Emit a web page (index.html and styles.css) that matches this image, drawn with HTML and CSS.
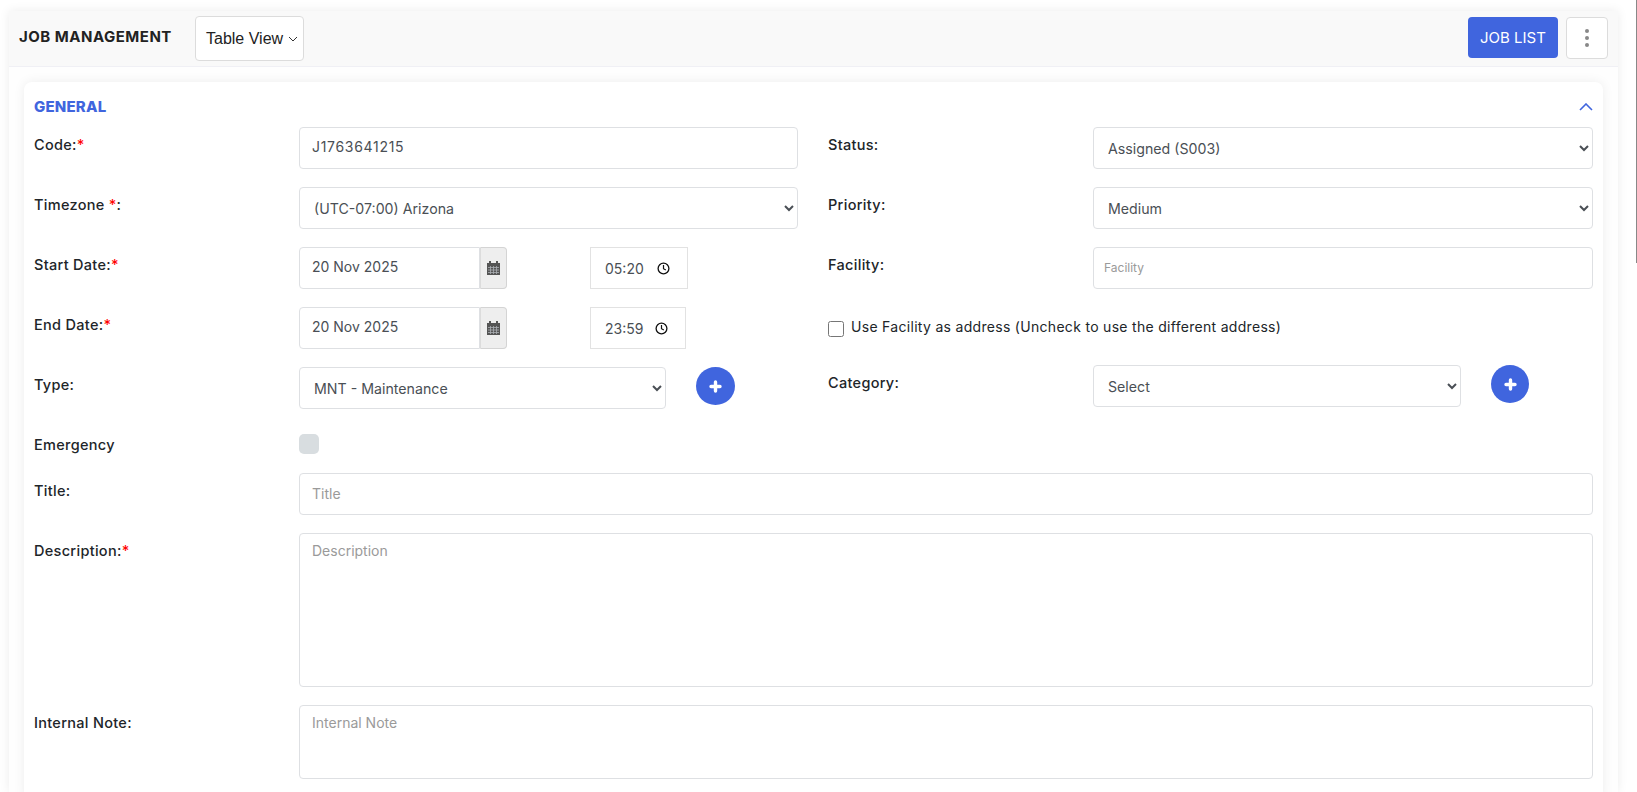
FILE: index.html
```html
<!DOCTYPE html>
<html lang="en">
<head>
    <meta charset="UTF-8">
    <meta name="viewport" content="width=device-width, initial-scale=1.0">
    <title>Job Management</title>
    <link rel="stylesheet" href="styles.css">
</head>
<body>
    <div class="page">
        <div class="panel">
            <div class="panel-header">
                <h1>JOB MANAGEMENT</h1>
                <div class="view-select">
                    <span>Table View</span>
                    <svg width="10" height="6" viewBox="0 0 10 6"><path d="M1 1l4 4 4-4" fill="none" stroke="#333" stroke-width="1"/></svg>
                </div>
                <div class="header-actions">
                    <button class="list-button">JOB LIST</button>
                    <button class="more-button"><span></span><span></span><span></span></button>
                </div>
            </div>

            <div class="panel-body">
                <div class="card">
                    <div class="card-title">
                        <h2>GENERAL</h2>
                        <svg width="14" height="8" viewBox="0 0 14 8"><path d="M1 7l6-6 6 6" fill="none" stroke="#4065de" stroke-width="1.600"/></svg>
                    </div>

                    <div class="form-grid">
                        <div class="row">
                            <label>Code:<em>*</em></label>
                            <input class="field code-input" type="text" value="J1763641215">
                        </div>
                        <div class="row">
                            <label>Status:</label>
                            <select class="field"><option>Assigned (S003)</option></select>
                        </div>

                        <div class="row">
                            <label>Timezone <em>*</em>:</label>
                            <select class="field"><option>(UTC-07:00) Arizona</option></select>
                        </div>
                        <div class="row">
                            <label>Priority:</label>
                            <select class="field"><option>Medium</option></select>
                        </div>

                        <div class="row">
                            <label>Start Date:<em>*</em></label>
                            <div class="date-time">
                                <div class="date-group">
                                    <input class="field" type="text" value="20 Nov 2025">
                                    <span class="date-addon">
                                        <svg width="13" height="14" viewBox="0 0 13 14"><path fill="#555" d="M2 0h2v2h5V0h2v2h2v12H0V2h2z"/><path stroke="#a9adb3" stroke-width="0.8" d="M1 6.500h11M1 9h11M1 11.500h11M3.500 5v8M6.500 5v8M9.500 5v8" fill="none"/></svg>
                                    </span>
                                </div>
                                <div class="time-box time-wide">
                                    <span>05:20</span>
                                    <svg width="13" height="13" viewBox="0 0 13 13"><circle cx="6.500" cy="6.500" r="5.400" fill="none" stroke="#111" stroke-width="1.300"/><path d="M6.500 3v3.700l2.300 1.300" fill="none" stroke="#111" stroke-width="1.200"/></svg>
                                </div>
                            </div>
                        </div>
                        <div class="row">
                            <label>Facility:</label>
                            <input class="field small-hint" type="text" placeholder="Facility">
                        </div>

                        <div class="row">
                            <label>End Date:<em>*</em></label>
                            <div class="date-time">
                                <div class="date-group">
                                    <input class="field" type="text" value="20 Nov 2025">
                                    <span class="date-addon">
                                        <svg width="13" height="14" viewBox="0 0 13 14"><path fill="#555" d="M2 0h2v2h5V0h2v2h2v12H0V2h2z"/><path stroke="#a9adb3" stroke-width="0.8" d="M1 6.500h11M1 9h11M1 11.500h11M3.500 5v8M6.500 5v8M9.500 5v8" fill="none"/></svg>
                                    </span>
                                </div>
                                <div class="time-box">
                                    <span>23:59</span>
                                    <svg width="13" height="13" viewBox="0 0 13 13"><circle cx="6.500" cy="6.500" r="5.400" fill="none" stroke="#111" stroke-width="1.300"/><path d="M6.500 3v3.700l2.300 1.300" fill="none" stroke="#111" stroke-width="1.200"/></svg>
                                </div>
                            </div>
                        </div>
                        <div class="row check-row">
                            <input type="checkbox" id="useFacility">
                            <label for="useFacility">Use Facility as address (Uncheck to use the different address)</label>
                        </div>

                        <div class="row">
                            <label>Type:</label>
                            <div class="with-add type-add">
                                <select class="field"><option>MNT - Maintenance</option></select>
                                <button class="add-button">
                                    <svg width="13" height="13" viewBox="0 0 13 13"><path d="M6.500 2v9M2 6.500h9" stroke="#fff" stroke-width="3.400" stroke-linecap="round"/></svg>
                                </button>
                            </div>
                        </div>
                        <div class="row category-row">
                            <label>Category:</label>
                            <div class="with-add category-add">
                                <select class="field"><option>Select</option></select>
                                <button class="add-button">
                                    <svg width="13" height="13" viewBox="0 0 13 13"><path d="M6.500 2v9M2 6.500h9" stroke="#fff" stroke-width="3.400" stroke-linecap="round"/></svg>
                                </button>
                            </div>
                        </div>
                    </div>

                    <div class="row emergency-row">
                        <label>Emergency</label>
                        <span class="switch-box"></span>
                    </div>
                    <div class="row full-row title-row">
                        <label>Title:</label>
                        <input class="field" type="text" placeholder="Title">
                    </div>
                    <div class="row full-row">
                        <label>Description:<em>*</em></label>
                        <textarea class="field desc-area" placeholder="Description"></textarea>
                    </div>
                    <div class="row full-row">
                        <label>Internal Note:</label>
                        <textarea class="field note-area" placeholder="Internal Note"></textarea>
                    </div>
                </div>
            </div>
        </div>
    </div>
    <div class="scroll-line"></div>
</body>
</html>
```
FILE: styles.css
```css
* {
    box-sizing: border-box;
}
html, body {
    height: 100%;
}
body {
    margin: 0;
    background-color: white;
    color: #212529;
    font-family: Inter, "Noto Sans", sans-serif;
    font-size: 14px;
    overflow: hidden;
}
.page {
    width: 1637px;
    height: 792px;
    padding: 11px 19px 0 9px;
}
.scroll-line {
    position: absolute;
    top: 0;
    right: 0;
    width: 1px;
    height: 263px;
    background-color: #888;
}
.panel {
    background-color: #fefefe;
    box-shadow: 0 0 10px rgba(0,0,0,0.08);
    height: 100%;
}
.panel-header {
    display: flex;
    align-items: flex-start;
    height: 56px;
    padding: 5px 10px 0 10px;
    background-color: #f9f9f9;
    border-bottom: 1px solid #f0f0f5;
}
h1 {
    margin: 12px 0 0 0;
    width: 176px;
    font-size: 15px;
    font-weight: 700;
    letter-spacing: 0.5px;
    line-height: 18px;
    color: #222;
}
.view-select {
    display: flex;
    align-items: center;
    gap: 5px;
    width: 109px;
    height: 45px;
    padding-left: 10px;
    background-color: white;
    border: 1px solid #dcdcdc;
    border-radius: 4px;
    font-family: "Liberation Sans", sans-serif;
    font-size: 16px;
    color: #222;
}
.header-actions {
    display: flex;
    gap: 8px;
    margin-left: auto;
    padding-top: 1px;
}
.list-button {
    width: 90px;
    height: 41px;
    background-color: #4065de;
    border: none;
    border-radius: 4px;
    color: white;
    font-family: Inter, sans-serif;
    font-size: 15px;
}
.more-button {
    display: flex;
    flex-direction: column;
    align-items: center;
    justify-content: center;
    gap: 3px;
    width: 42px;
    height: 42px;
    background-color: white;
    border: 1px solid #dcdcdc;
    border-radius: 4px;
}
.more-button span {
    width: 4px;
    height: 4px;
    border-radius: 50%;
    background-color: #888;
}
.panel-body {
    padding: 15px 15px 0 15px;
}
.card {
    height: 720px;
    padding: 0 10px;
    background-color: white;
    border-radius: 8px;
    box-shadow: 0 0 12px rgba(0,0,0,0.07);
}
.card-title {
    display: flex;
    align-items: center;
    justify-content: space-between;
    height: 45px;
}
.card-title svg {
    margin-top: 4px;
}
h2 {
    margin: 4px 0 0 0;
    font-size: 15px;
    font-weight: 800;
    letter-spacing: 0.2px;
    color: #4065de;
}
.form-grid {
    display: grid;
    grid-template-columns: 764px 765px;
    column-gap: 30px;
    row-gap: 18px;
}
.row {
    display: grid;
    grid-template-columns: 265px 1fr;
    height: 42px;
}
.row label {
    padding-top: 9px;
    font-size: 14.5px;
    font-weight: 500;
    letter-spacing: 0.3px;
    line-height: 17px;
}
em {
    color: red;
    font-style: normal;
}
.field {
    width: 100%;
    height: 42px;
    padding: 0 12px;
    background-color: white;
    border: 1px solid #dee0e3;
    border-radius: 4px;
    color: #4a4f55;
    font-family: Inter, sans-serif;
    font-size: 14px;
    outline: none;
}
input.field {
    padding-bottom: 2px;
}
select.field {
    padding-left: 10px;
    font-size: 14.2px;
}
input.code-input {
    padding-bottom: 3px;
    letter-spacing: 0.7px;
}
.field::placeholder {
    color: #9a9a9a;
}
input.small-hint {
    padding: 0 0 3px 10px;
}
.small-hint::placeholder {
    font-size: 12px;
}
.date-time {
    display: flex;
    gap: 83px;
}
.date-group {
    display: flex;
    width: 208px;
}
.date-group .field {
    width: 181px;
    border-radius: 4px 0 0 4px;
    padding-bottom: 3px;
}
.date-addon {
    display: flex;
    align-items: center;
    justify-content: center;
    width: 27px;
    height: 42px;
    background-color: #eee;
    border: 1px solid #d4d4d4;
    border-left-color: #dcdcdc;
    border-radius: 0 4px 4px 0;
}
.time-box {
    display: flex;
    align-items: center;
    justify-content: space-between;
    width: 96px;
    height: 42px;
    padding: 0 17px 0 14px;
    border: 1px solid #e2e2e2;
    color: #4a4f55;
}
.time-wide {
    width: 98px;
}
.check-row {
    display: flex;
    align-items: flex-start;
    height: 42px;
    padding-top: 14px;
}
.check-row input {
    width: 16px;
    height: 16px;
    margin: 0 7px 0 0;
}
.row.check-row label {
    margin-top: -3px;
    padding-top: 0;
    font-size: 14px;
    font-weight: 400;
    line-height: 17px;
}
.category-row {
    margin-top: -2px;
}
.with-add {
    display: flex;
    gap: 30px;
}
.type-add .field {
    width: 367px;
}
.category-add .field {
    width: 368px;
}
.add-button {
    display: flex;
    align-items: center;
    justify-content: center;
    width: 39px;
    height: 38px;
    padding: 0;
    background-color: #4065de;
    border: none;
    border-radius: 50%;
}
.category-add .add-button {
    width: 38px;
}
.emergency-row {
    height: 20px;
    margin-top: 25px;
}
.emergency-row label {
    padding-top: 2px;
}
.switch-box {
    width: 20px;
    height: 20px;
    background-color: #d8dde0;
    border-radius: 5px;
}
.full-row {
    margin-top: 18px;
    height: auto;
}
.title-row {
    margin-top: 19px;
}
.desc-area {
    display: block;
    height: 154px;
    padding-top: 8px;
    resize: none;
}
.note-area {
    display: block;
    height: 74px;
    padding-top: 8px;
    resize: none;
}
```
